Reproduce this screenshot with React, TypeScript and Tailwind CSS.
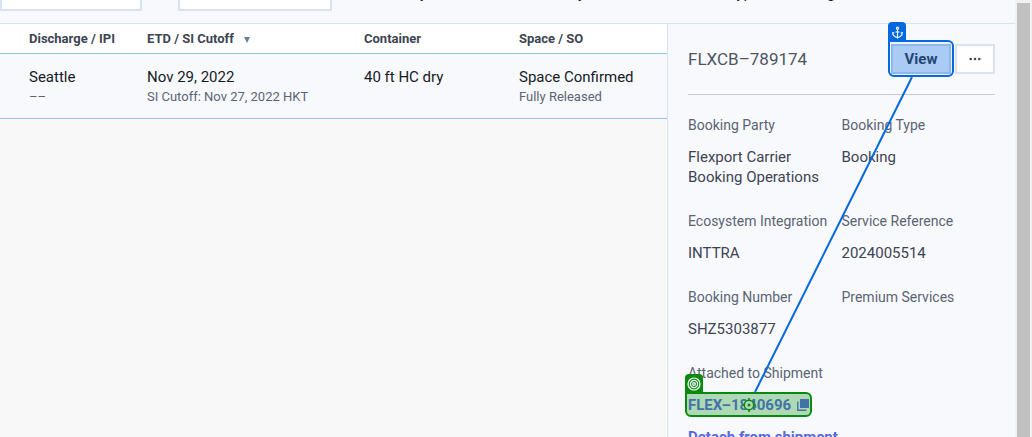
import type { ReactNode } from "react";
import { Anchor } from "lucide-react";

function Field({ label, children }: { label: string; children?: ReactNode }) {
  return (
    <div className="whitespace-nowrap">
      <dt className="text-[#5b6473]">{label}</dt>
      <dd className="mt-3 text-[15px] leading-5 text-[#3d4452]">{children}</dd>
    </div>
  );
}

function Cell({ first, title, note }: { first?: boolean; title: string; note?: string }) {
  return (
    <td className={first ? "pt-[13px] pb-[11px] pl-[29px]" : "pt-[13px] pb-[11px]"}>
      <div className="text-[15px] leading-5">{title}</div>
      {note && <div className="text-[13px] leading-5 text-[#5b6473]">{note}</div>}
    </td>
  );
}

function TargetIcon() {
  return (
    <svg viewBox="0 0 14 14" className="h-3.5 w-3.5" fill="none" stroke="white" strokeWidth="1.2">
      <circle cx="7" cy="7" r="6" />
      <circle cx="7" cy="7" r="3.6" />
      <circle cx="7" cy="7" r="1.4" />
    </svg>
  );
}

function CopyIcon() {
  return (
    <svg viewBox="0 0 12 12" className="relative h-3 w-3" fill="none">
      <path d="M3 0h9v9H3z" fill="#4273a8" />
      <path d="M.8 2.5v8.7H9.5" stroke="#4273a8" strokeWidth="1.4" />
    </svg>
  );
}

export default function App() {
  return (
    <div className="flex h-screen overflow-hidden bg-[#f8f9fd] font-['Roboto',sans-serif] text-sm leading-5">
      <main className="flex min-w-0 flex-1 flex-col">
        <header className="flex h-6 shrink-0 items-end overflow-hidden border-b border-[#d9e2f3] pb-3 text-[15px] text-[#151b26]">
          <input aria-label="Search bookings" className="h-9 w-[142px] shrink-0 border-2 border-[#d9e2f3] bg-white" />
          <input aria-label="Carrier" className="ml-9 h-9 w-[154px] shrink-0 border-2 border-[#d9e2f3] bg-white" />
          <div className="ml-[70px] flex pb-2 whitespace-nowrap">
            <span className="w-[158px]">Any</span>
            <span className="w-[168px]">Any</span>
            <span>Type of Booking</span>
          </div>
        </header>
        <div className="flex min-h-0 flex-1">
          <section className="min-w-0 flex-1 bg-[#f8f8f8]">
            <table className="w-full table-fixed border-separate border-spacing-0 text-left whitespace-nowrap">
              <colgroup>
                <col className="w-[147px]" />
                <col className="w-[217px]" />
                <col className="w-[155px]" />
                <col />
              </colgroup>
              <thead className="bg-white text-[13px] text-[#3d4452] [&_th]:h-[30px] [&_th]:border-b [&_th]:border-[#94c6d8] [&_th]:font-bold">
                <tr>
                  <th className="pl-[29px]">Discharge / IPI</th>
                  <th>
                    ETD / SI Cutoff
                    <svg viewBox="0 0 6 6" className="ml-2.5 inline-block h-1.5 w-1.5 align-baseline">
                      <path d="M0 0h6L3 6z" fill="#6f7f92" />
                    </svg>
                  </th>
                  <th>Container</th>
                  <th>Space / SO</th>
                </tr>
              </thead>
              <tbody className="bg-[#f8f9fd] align-top text-[#151b26] [&_td]:border-b [&_td]:border-[#94c6d8]">
                <tr>
                  <Cell first title="Seattle" note="––" />
                  <Cell title="Nov 29, 2022" note="SI Cutoff: Nov 27, 2022 HKT" />
                  <Cell title="40 ft HC dry" />
                  <Cell title="Space Confirmed" note="Fully Released" />
                </tr>
              </tbody>
            </table>
          </section>
          <aside className="relative w-[348px] shrink-0 border-l border-[#d9e2f3] px-5 pt-5">
            <div className="flex items-center justify-between border-b border-[#c8cacd] pb-5">
              <h1 className="text-[17px] text-[#4d5563]">FLXCB–789174</h1>
              <div className="flex gap-1">
                <div className="relative">
                  <button className="block h-[30px] w-[60px] border-2 border-[#98bcea] bg-[#b3d1f6] text-[15px] leading-5 font-bold text-[#26466f]">
                    View
                  </button>
                  <span className="pointer-events-none absolute -inset-x-[3px] -top-1 -bottom-[3px] rounded-md rounded-tl-none border-2 border-[#0568df] bg-[#0568df]/5" />
                  <span className="pointer-events-none absolute -top-[22px] -left-[3px] flex h-5 w-[18px] items-center justify-center rounded-t bg-[#0568df] text-white">
                    <Anchor size={13} strokeWidth={2} />
                  </span>
                </div>
                <button aria-label="More actions" className="flex h-[30px] w-10 items-center justify-center border-2 border-[#d9e2f3] bg-white">
                  <svg viewBox="0 0 12 4" className="h-1 w-3" fill="#3d4a60">
                    <circle cx="1.7" cy="2" r="1.3" />
                    <circle cx="6" cy="2" r="1.3" />
                    <circle cx="10.3" cy="2" r="1.3" />
                  </svg>
                </button>
              </div>
            </div>
            <dl className="grid grid-cols-2 gap-y-6 pt-5">
              <Field label="Booking Party">
                Flexport Carrier
                <br />
                Booking Operations
              </Field>
              <Field label="Booking Type">Booking</Field>
              <Field label="Ecosystem Integration">INTTRA</Field>
              <Field label="Service Reference">2024005514</Field>
              <Field label="Booking Number">SHZ5303877</Field>
              <Field label="Premium Services" />
              <Field label="Attached to Shipment">
                <a href="#shipment" className="relative inline-flex h-5 items-center gap-1.5 align-top font-bold text-[#4273a8]">
                  <span className="pointer-events-none absolute -inset-x-[3px] -top-[3px] -bottom-0.5 rounded-md rounded-tl-none border-2 border-[#078a0d] bg-[#078a0d]/30" />
                  <span className="pointer-events-none absolute -top-[21px] -left-[3px] flex h-[19px] w-[18px] items-center justify-center rounded-t bg-[#078a0d]">
                    <TargetIcon />
                  </span>
                  <span className="relative">FLEX–1840696</span>
                  <CopyIcon />
                  <svg viewBox="0 0 14 14" className="pointer-events-none absolute top-[3px] left-[54px] h-3.5 w-3.5" fill="none" stroke="#078a0d" strokeWidth="1.5">
                    <circle cx="7" cy="7" r="4.7" fill="#b3d8b9" />
                    <path d="M7 0v3M7 11v3M0 7h3M11 7h3" />
                    <circle cx="7" cy="7" r="1.5" fill="#078a0d" stroke="none" />
                  </svg>
                </a>
                <a href="#detach" className="mt-3 block font-bold text-[#5868dd]">
                  Detach from shipment
                </a>
              </Field>
            </dl>
            <svg viewBox="0 0 347 413" className="pointer-events-none absolute top-0 left-0 h-[413px] w-[347px]" fill="none">
              <path d="M244 53 87 368" stroke="#0568df" strokeWidth="2" />
            </svg>
          </aside>
        </div>
      </main>
      <div className="w-[17px] shrink-0 bg-[#f1f1f1] px-0.5 pt-[3px]">
        <div className="h-full w-[13px] bg-[#c1c1c1]" />
      </div>
    </div>
  );
}
